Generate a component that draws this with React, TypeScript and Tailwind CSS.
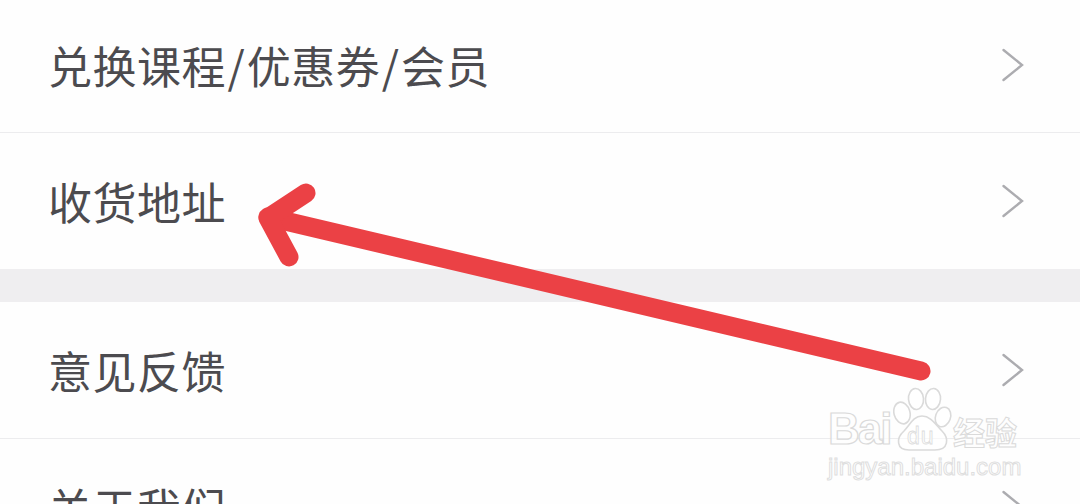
import React from "react";

function Chevron() {
  return (
    <svg width="24" height="34" viewBox="0 0 24 34" fill="none" className="shrink-0">
      <path d="M3.5 2 L22 17 L3.5 32" stroke="#acacb0" strokeWidth="2.4" strokeLinecap="round" strokeLinejoin="miter" />
    </svg>
  );
}

function Row({ label, className }: { label: React.ReactNode; className: string }) {
  return (
    <div className={`flex items-center justify-between pl-[48px] pr-[56px] ${className}`}>
      <span className="text-[44px] leading-none tracking-[0.5px] text-[#4c4b4f] font-['Noto_Sans_CJK_SC','Noto_Sans',sans-serif]">{label}</span>
      <Chevron />
    </div>
  );
}

function Slash() {
  return <span className="mx-[1.5px]">/</span>;
}

export default function App() {
  return (
    <div className="relative w-[1080px] h-[504px] overflow-hidden bg-[#fefefe]">
      <Row
        label={
          <>
            兑换课程
            <Slash />
            优惠券
            <Slash />
            会员
          </>
        }
        className="h-[129px] pb-[3px] border-b border-[#ececee] box-content"
      />
      <Row label="收货地址" className="h-[136px]" />
      <div className="h-[33px] bg-[#efeef0]" />
      <Row label="意见反馈" className="h-[136px] border-b border-[#ececee] box-content" />
      <Row label="关于我们" className="h-[136px]" />

      <svg className="absolute left-0 top-0" width="1080" height="504" viewBox="0 0 1080 504" fill="none">
        <path d="M921 371 L268 217" stroke="#eb4145" strokeWidth="19" strokeLinecap="round" />
        <path d="M306 193 L268 218 L289 257" stroke="#eb4145" strokeWidth="19" strokeLinecap="round" strokeLinejoin="round" />
      </svg>

      <div className="absolute left-[828px] top-[386px] w-[200px]">
        <div className="flex items-start h-[66px]">
          <div className="w-[65px] mt-[20px] text-[44px] leading-[46px] tracking-[-2px] font-bold font-['Liberation_Sans',sans-serif] text-white/70 [-webkit-text-stroke:1.2px_#dadada]">
            Bai
          </div>
          <svg className="shrink-0" width="60" height="66" viewBox="893 386 60 66" fill="none">
            <g stroke="#dadada" strokeWidth="1.6" fill="#ffffff" fillOpacity="0.6">
              <ellipse cx="902" cy="413" rx="8" ry="11" transform="rotate(-15 902 413)" />
              <ellipse cx="916" cy="399" rx="7.5" ry="10.5" transform="rotate(-5 916 399)" />
              <ellipse cx="933" cy="399" rx="7.5" ry="10.5" transform="rotate(5 933 399)" />
              <ellipse cx="943" cy="417" rx="7.5" ry="10" transform="rotate(20 943 417)" />
              <path d="M922 416 C913 416 910 425 904 431 C896 438 896 450 909 450 L935 450 C949 450 949 438 942 431 C936 425 931 416 922 416 Z" />
            </g>
            <text x="907" y="444" fontSize="23" letterSpacing="1" fontFamily="'Liberation Sans', sans-serif" fill="#ffffff" stroke="#dcdcdc" strokeWidth="0.8">
              du
            </text>
          </svg>
          <div className="mt-[25px] text-[32px] leading-[41px] font-bold font-['Noto_Sans_CJK_SC',sans-serif] text-white/70 [-webkit-text-stroke:1px_#dadada]">
            经验
          </div>
        </div>
        <div className="text-[24px] leading-[30px] font-['Liberation_Sans',sans-serif] text-white/70 [-webkit-text-stroke:1px_#dedede]">
          jingyan.baidu.com
        </div>
      </div>
    </div>
  );
}
